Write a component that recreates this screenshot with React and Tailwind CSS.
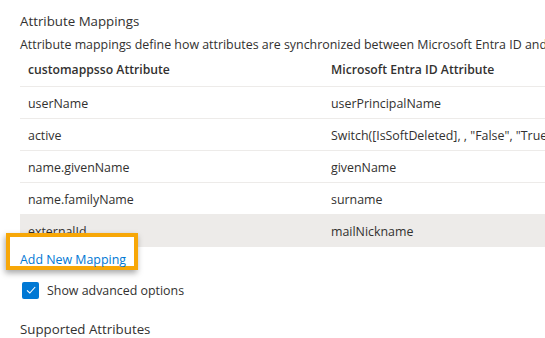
import React from "react";

const rows = [
  ["userName", "userPrincipalName"],
  ["active", 'Switch([IsSoftDeleted], , "False", "True", "True", "False")'],
  ["name.givenName", "givenName"],
  ["name.familyName", "surname"],
  ["externalId", "mailNickname"],
];

export default function App() {
  return (
    <div
      className="w-[545px] h-[338px] overflow-hidden bg-white text-[#323130] pl-[20px] pt-[11px]"
      style={{ fontFamily: '"Open Sans", "Noto Sans", sans-serif' }}
    >
      <div className="text-[13.3px] leading-[20px] whitespace-nowrap">Attribute Mappings</div>
      <div className="text-[12.4px] leading-[20px] mt-[4px] whitespace-nowrap">
        Attribute mappings define how attributes are synchronized between Microsoft Entra ID and customappsso
      </div>
      <div className="w-[700px]">
        <div className="flex h-[32px] items-center border-b border-[#edebe9] text-[12.2px] font-semibold">
          <div className="w-[311px] pl-[8px]">customappsso Attribute</div>
          <div className="whitespace-nowrap">Microsoft Entra ID Attribute</div>
        </div>
        {rows.map(([a, b], i) => (
          <div
            key={a}
            className={
              i === rows.length - 1
                ? "flex h-[32px] items-center pt-[3px] bg-[#edebe9] text-[12.4px]"
                : "flex h-[32px] items-center pt-[3px] border-b border-[#edebe9] text-[12.4px]"
            }
          >
            <div className="w-[311px] pl-[8px]">{a}</div>
            <div className="whitespace-nowrap">{b}</div>
          </div>
        ))}
      </div>
      <div className="relative h-[20px] w-fit">
        <span className="absolute left-[-14px] top-[-14px] w-[132px] h-[37px] bg-white border-[4px] border-[#f7a707] shadow-[-1px_3px_6px_rgba(0,0,0,0.35)]" />
        <span className="relative -top-[1px] text-[12.4px] leading-[20px] text-[#0078d4] whitespace-nowrap">Add New Mapping</span>
      </div>
      <div className="flex items-center mt-[13px] h-[20px]">
        <span className="ml-[2px] w-[17px] h-[17px] rounded-[2px] bg-[#0078d4] flex items-center justify-center">
          <svg width="12" height="12" viewBox="0 0 12 12" fill="none">
            <path d="M2 6.3 L4.8 9 L10.2 3" stroke="white" strokeWidth="1.1" />
          </svg>
        </span>
        <span className="ml-[8px] text-[12.4px] leading-[20px] relative top-[1px]">Show advanced options</span>
      </div>
      <div className="mt-[19px] text-[13.3px] leading-[20px]">Supported Attributes</div>
    </div>
  );
}
